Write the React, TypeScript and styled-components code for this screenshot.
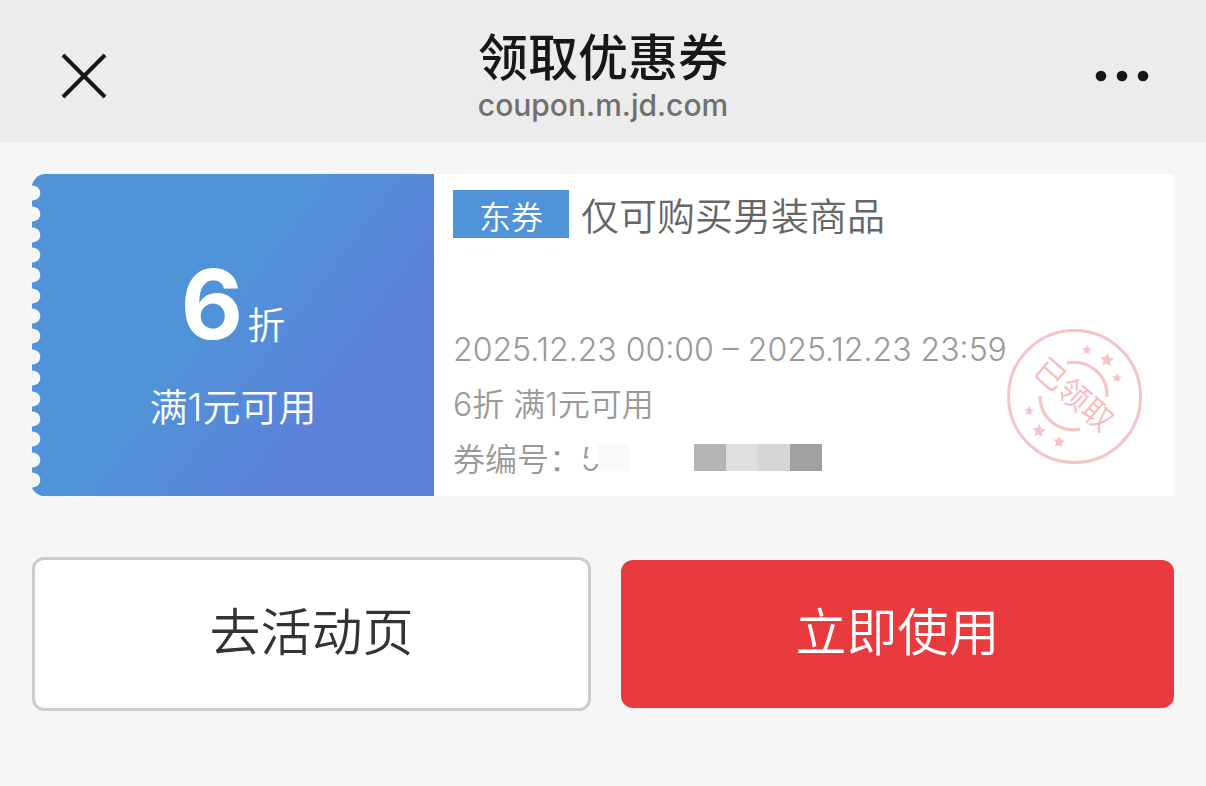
import React from "react";
import styled, { createGlobalStyle } from "styled-components";

const GlobalStyle = createGlobalStyle`
  * { margin: 0; }
  body {
    background: #f6f6f6;
    font-family: Inter, "Noto Sans CJK SC", sans-serif;
    font-weight: 350;
    -webkit-font-smoothing: antialiased;
  }
`;

const Header = styled.header`
  display: flex;
  align-items: center;
  justify-content: space-between;
  min-height: 132px;
  padding: 10px 54px 0;
  background: #ececec;
`;

const IconButton = styled.button`
  display: flex;
  padding: 0;
  border: 0;
  background: none;
  color: #171717;
`;

const HeaderText = styled.div`
  text-align: center;
`;

const Title = styled.h1`
  font-size: 50px;
  line-height: 58px;
  font-weight: 500;
  color: #171717;
`;

const Domain = styled.p`
  font-size: 30px;
  line-height: 36px;
  font-weight: 500;
  color: #707070;
`;

const Main = styled.main`
  padding: 32px;
`;

const Card = styled.section`
  display: flex;
  min-height: 322px;
  background: #fff;
`;

const Value = styled.div`
  box-sizing: border-box;
  display: flex;
  position: relative;
  flex: 0 0 402px;
  flex-direction: column;
  align-items: center;
  justify-content: center;
  padding-top: 14px;
  color: #fff;
  background: linear-gradient(127deg, #5093d8 43%, #5d7fd9 78%);
`;

const Edge = styled.svg`
  position: absolute;
  top: 0;
  left: 0;
`;

const Amount = styled.p`
  display: flex;
  align-items: baseline;
  gap: 4px;
  font-size: 38px;
  line-height: 108px;
`;

const Figure = styled.strong`
  font-size: 96px;
  font-weight: 700;
`;

const Condition = styled.p`
  font-size: 38px;
  line-height: 56px;
`;

const Info = styled.div`
  display: flex;
  position: relative;
  flex: 1;
  flex-direction: column;
  justify-content: space-between;
  padding: 16px 19px 9px;
`;

const Heading = styled.div`
  display: flex;
  gap: 12px;
`;

const Tag = styled.span`
  width: 116px;
  font-size: 32px;
  line-height: 56px;
  height: 48px;
  text-align: center;
  color: #fff;
  background: #5093d8;
`;

const Name = styled.h2`
  font-size: 38px;
  line-height: 52px;
  font-weight: inherit;
  color: #666;
`;

const Detail = styled.p`
  display: flex;
  align-items: center;
  font-size: 32px;
  line-height: 55px;
  color: #999;
  white-space: pre;
`;

const Code = styled.span`
  position: relative;
`;

const Mosaic = styled.svg`
  position: absolute;
  left: 0;
  top: 12px;
`;

const Stamp = styled.svg`
  position: absolute;
  right: 32px;
  bottom: 32px;
`;

const Actions = styled.div`
  display: flex;
  align-items: center;
  gap: 30px;
  margin-top: 61px;
`;

const Action = styled.button<{ $primary?: boolean }>`
  box-sizing: content-box;
  flex: 1 1 0;
  min-height: 138px;
  padding: 0 0 10px;
  border: ${(p) => (p.$primary ? "0" : "3px solid #ccc")};
  border-radius: 12px;
  font-family: inherit;
  font-size: 51px;
  font-weight: inherit;
  color: ${(p) => (p.$primary ? "#fff" : "#333")};
  background: ${(p) => (p.$primary ? "#e93b3d" : "#fff")};
`;

const notches = [19, 40, 61, 81, 101, 122, 142, 162, 183, 204, 225, 245, 265, 286, 306];

const stars = [
  [81, 22, 5], [101, 32, 7], [111, 50, 5],
  [23, 83, 5], [33, 103, 7], [53, 114, 6],
];

const starPoints = (cx: number, cy: number, r: number) =>
  Array.from({ length: 10 }, (_, i) => {
    const a = (Math.PI / 5) * i - Math.PI / 2 + 0.1;
    const d = i % 2 ? r * 0.5 : r;
    return `${cx + d * Math.cos(a)},${cy + d * Math.sin(a)}`;
  }).join(" ");

export default function App() {
  return (
    <>
      <GlobalStyle />
      <Header>
        <IconButton aria-label="关闭">
          <svg width="60" height="60" viewBox="0 0 60 60" stroke="currentColor" strokeWidth="4">
            <path d="M9 9L51 51M51 9L9 51" />
          </svg>
        </IconButton>
        <HeaderText>
          <Title>领取优惠券</Title>
          <Domain>coupon.m.jd.com</Domain>
        </HeaderText>
        <IconButton aria-label="更多">
          <svg width="60" height="60" viewBox="0 0 60 60" fill="currentColor">
            <circle cx="9" cy="30" r="5.3" />
            <circle cx="30" cy="30" r="5.3" />
            <circle cx="51" cy="30" r="5.3" />
          </svg>
        </IconButton>
      </Header>
      <Main>
        <Card>
          <Value>
            <Edge width="12" height="322" viewBox="0 0 12 322" fill="#f6f6f6" aria-hidden="true">
              <path d="M0 0H12Q3 1 0 11ZM0 322H10Q3 320 0 314Z" />
              {notches.map((y) => (
                <path key={y} d={`M0 ${y - 7.5}C11 ${y - 7.5} 11 ${y + 7.5} 0 ${y + 7.5}Z`} />
              ))}
            </Edge>
            <Amount>
              <Figure>6</Figure>折
            </Amount>
            <Condition>满1元可用</Condition>
          </Value>
          <Info>
            <Heading>
              <Tag>东券</Tag>
              <Name>仅可购买男装商品</Name>
            </Heading>
            <div>
              <Detail>2025.12.23 00:00 – 2025.12.23 23:59</Detail>
              <Detail>6折 满1元可用</Detail>
              <Detail>
                券编号：
                <Code>
                  5
                  <Mosaic width="241" height="27" viewBox="0 0 241 27" aria-hidden="true">
                    <path d="M0 0H17V20H12L7 13V3H0Z" fill="#fff" />
                    <rect x="17" width="32" height="27" fill="#f9f9f9" />
                    <rect x="113" width="32" height="27" fill="#b4b4b4" />
                    <rect x="145" width="32" height="27" fill="#dfdfdf" />
                    <rect x="177" width="32" height="27" fill="#d6d6d6" />
                    <rect x="209" width="32" height="27" fill="#a0a0a0" />
                  </Mosaic>
                </Code>
              </Detail>
            </div>
            <Stamp width="136" height="136" viewBox="0 0 136 136" fill="none" stroke="#f6c4c5">
              <circle cx="68.5" cy="68.5" r="66" strokeWidth="3" />
              <path d="M61 35A33 33 0 0 1 101 69M34 68A33 33 0 0 0 74 101" strokeWidth="3" />
              {stars.map(([x, y, r]) => (
                <polygon key={`${x}-${y}`} points={starPoints(x, y, r)} fill="#f6c4c5" stroke="none" />
              ))}
              <text
                x="67"
                y="78"
                transform="rotate(41 68 68)"
                textAnchor="middle"
                fontSize="31"
                fill="#f6bcbd"
                stroke="none"
              >
                已领取
              </text>
            </Stamp>
          </Info>
        </Card>
        <Actions>
          <Action>去活动页</Action>
          <Action $primary>立即使用</Action>
        </Actions>
      </Main>
    </>
  );
}
